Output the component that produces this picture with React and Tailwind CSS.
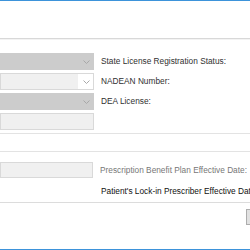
import React from 'react';

function Chevron() {
  return (
    <svg width="7" height="4" viewBox="0 0 7 4" className="shrink-0">
      <path d="M0.5 0.5 L3.5 3.5 L6.5 0.5" fill="none" stroke="#a8a8a8" strokeWidth="1" />
    </svg>
  );
}

function GrayCombo() {
  return (
    <div className="flex h-[17px] w-[94px] items-center justify-end bg-[#cccccc] pr-[4px]">
      <Chevron />
    </div>
  );
}

function EditCombo() {
  return (
    <div className="flex h-[17px] w-[94px] items-center border border-[#d9d9d9] bg-white pr-[3px]">
      <div className="h-full w-[77px] bg-[#f0f0f0]" />
      <div className="flex flex-1 justify-end">
        <Chevron />
      </div>
    </div>
  );
}

function TextBox() {
  return <div className="h-[17px] w-[94px] border border-[#d9d9d9] bg-[#f0f0f0]" />;
}

function Row({ control, label, gray }) {
  return (
    <div className="flex items-center">
      {control}
      <span className={`ml-[7px] whitespace-nowrap ${gray ? 'text-[#777777]' : 'text-[#303030]'}`}>
        {label}
      </span>
    </div>
  );
}

export default function App() {
  return (
    <div
      className="flex h-[250px] w-[250px] flex-col overflow-hidden bg-white text-[8.3px] leading-none"
      style={{ fontFamily: '"Liberation Sans", Arial, sans-serif' }}
    >
      <div className="h-px shrink-0 bg-[#3d93da]" />
      <div className="h-[37px] shrink-0" />
      <div className="h-px shrink-0 bg-[#d8d8d8]" />
      <div className="h-px shrink-0 bg-[#f3f3f3]" />

      <div className="flex shrink-0 flex-col gap-[3px] pt-[13px]">
        <Row control={<GrayCombo />} label="State License Registration Status:" />
        <Row control={<EditCombo />} label="NADEAN Number:" />
        <Row control={<GrayCombo />} label="DEA License:" />
        <Row control={<TextBox />} label="" />
      </div>

      <div className="mt-[3px] h-px shrink-0 bg-[#e3e3e3]" />
      <div className="h-[17px] shrink-0" />
      <div className="h-px shrink-0 bg-[#e3e3e3]" />

      <div className="flex shrink-0 flex-col pt-[10px]">
        <Row control={<div className="h-[16px] w-[93px] border border-[#d9d9d9] bg-[#f0f0f0]" />} label="Prescription Benefit Plan Effective Date:" gray />
        <div className="flex h-[24px] items-center pl-[101px] pt-[3px] whitespace-nowrap text-[#111]">
          Patient's Lock-in Prescriber Effective Date:
        </div>
      </div>

      <div className="h-px shrink-0 bg-[#dcdcdc]" />
      <div className="flex shrink-0 justify-end pt-[6px]">
        <div className="h-[16px] w-[4px] border-y border-l border-[#adadad] bg-[#e1e1e1]" />
      </div>
      <div className="flex-1" />
      <div className="h-px shrink-0 bg-[#3d93da]" />
    </div>
  );
}
